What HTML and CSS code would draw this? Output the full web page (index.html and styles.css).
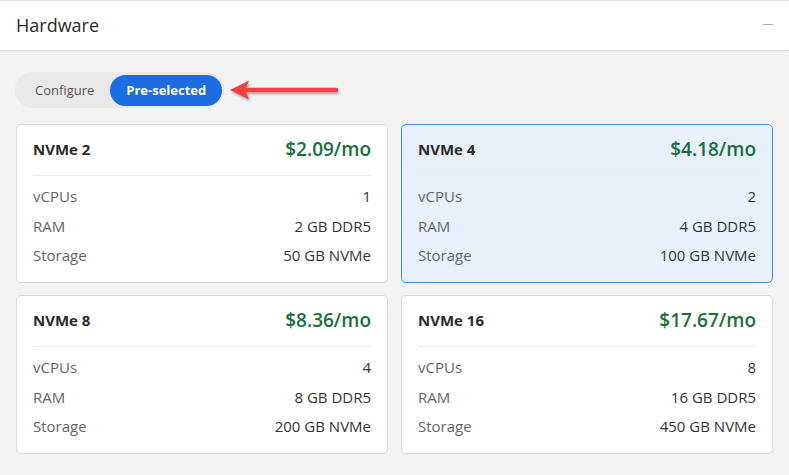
FILE: index.html
```html
<!DOCTYPE html>
<html>
<head>
<meta charset="utf-8">
<link rel="stylesheet" href="styles.css">
</head>
<body>
<div class="panel">
  <header class="head">
    <h1 class="title">Hardware</h1>
    <span class="minimize"></span>
  </header>
  <div class="body">
    <div class="toolbar">
      <div class="toggle">
        <span class="opt">Configure</span>
        <span class="opt active">Pre-selected</span>
      </div>
      <svg class="arrow" width="114" height="30" viewBox="0 0 114 30">
        <defs>
          <filter id="sh" x="-20%" y="-50%" width="140%" height="200%">
            <feDropShadow dx="1" dy="2" stdDeviation="1.2" flood-color="#000" flood-opacity="0.3"/>
          </filter>
        </defs>
        <g filter="url(#sh)">
          <line x1="16" y1="13" x2="107" y2="13" stroke="#ef4242" stroke-width="4.5" stroke-linecap="round"/>
          <path d="M1 13 L20 3.5 L16.5 13 L20 22.5 Z" fill="#ef4242"/>
        </g>
      </svg>
    </div>
    <div class="grid">
      <div class="card">
        <div class="card-head"><span class="name">NVMe 2</span><span class="price">$2.09/mo</span></div>
        <div class="rows">
          <div class="row"><span class="label">vCPUs</span><span class="val">1</span></div>
          <div class="row"><span class="label">RAM</span><span class="val">2 GB DDR5</span></div>
          <div class="row"><span class="label">Storage</span><span class="val">50 GB NVMe</span></div>
        </div>
      </div>
      <div class="card selected">
        <div class="card-head"><span class="name">NVMe 4</span><span class="price">$4.18/mo</span></div>
        <div class="rows">
          <div class="row"><span class="label">vCPUs</span><span class="val">2</span></div>
          <div class="row"><span class="label">RAM</span><span class="val">4 GB DDR5</span></div>
          <div class="row"><span class="label">Storage</span><span class="val">100 GB NVMe</span></div>
        </div>
      </div>
      <div class="card">
        <div class="card-head"><span class="name">NVMe 8</span><span class="price">$8.36/mo</span></div>
        <div class="rows">
          <div class="row"><span class="label">vCPUs</span><span class="val">4</span></div>
          <div class="row"><span class="label">RAM</span><span class="val">8 GB DDR5</span></div>
          <div class="row"><span class="label">Storage</span><span class="val">200 GB NVMe</span></div>
        </div>
      </div>
      <div class="card">
        <div class="card-head"><span class="name">NVMe 16</span><span class="price">$17.67/mo</span></div>
        <div class="rows">
          <div class="row"><span class="label">vCPUs</span><span class="val">8</span></div>
          <div class="row"><span class="label">RAM</span><span class="val">16 GB DDR5</span></div>
          <div class="row"><span class="label">Storage</span><span class="val">450 GB NVMe</span></div>
        </div>
      </div>
    </div>
  </div>
</div>
</body>
</html>
```

FILE: styles.css
```css
* { box-sizing: border-box; }
html, body { margin: 0; padding: 0; }
body {
  font-family: "Open Sans", "Liberation Sans", sans-serif;
  background: #f3f3f3;
  color: #333;
  width: 789px;
  height: 475px;
  overflow: hidden;
}
.panel { display: flex; flex-direction: column; }
.head {
  background: #fff;
  border-top: 1px solid #e6e6e6;
  border-bottom: 1px solid #dcdcdc;
  box-shadow: 0 1px 2px rgba(0,0,0,0.06);
  height: 51px;
  display: flex;
  align-items: center;
  justify-content: space-between;
  padding: 0 16px 2px 16px;
}
.title {
  margin: 0;
  font-size: 18px;
  font-weight: 500;
  color: #2b2b2b;
}
.minimize {
  width: 10px;
  height: 1px;
  background: #b5b5b5;
}
.body { padding: 21px 16px 0 16px; }
.toolbar { display: flex; align-items: center; gap: 5px; }
.toggle {
  display: flex;
  align-items: center;
  background: #e9e9e9;
  border-radius: 18px;
  padding: 2px 2px 2px 0;
  height: 36px;
  margin-left: -1px;
}
.opt {
  font-size: 13px;
  color: #555;
  padding: 0 16px 0 20px;
  line-height: 31px;
}
.opt.active {
  background: #1c6ee0;
  color: #fff;
  font-weight: 700;
  border-radius: 16px;
  padding: 0 16px;
  height: 31px;
}
.arrow { display: block; margin-top: 3px; }
.grid {
  display: grid;
  grid-template-columns: 372px 372px;
  column-gap: 13px;
  row-gap: 12px;
  margin-top: 16px;
}
.card {
  background: #fff;
  border: 1.5px solid #d8d8d8;
  border-radius: 5px;
  padding: 12px 16px 12px 16px;
  height: 159px;
}
.card.selected {
  background: #e8f0fc;
  border-color: #4a89e8;
}
.card-head {
  display: flex;
  justify-content: space-between;
  align-items: center;
  height: 24px;
}
.name { font-size: 15px; font-weight: 700; color: #2a2a2a; }
.price { font-size: 19px; font-weight: 600; color: #18703a; }
.rows {
  border-top: 1px solid #ececec;
  margin-top: 14px;
  padding-top: 6px;
}
.row {
  display: flex;
  justify-content: space-between;
  font-size: 15px;
  line-height: 29.5px;
}
.label { color: #666; }
.val { color: #333; }
```
